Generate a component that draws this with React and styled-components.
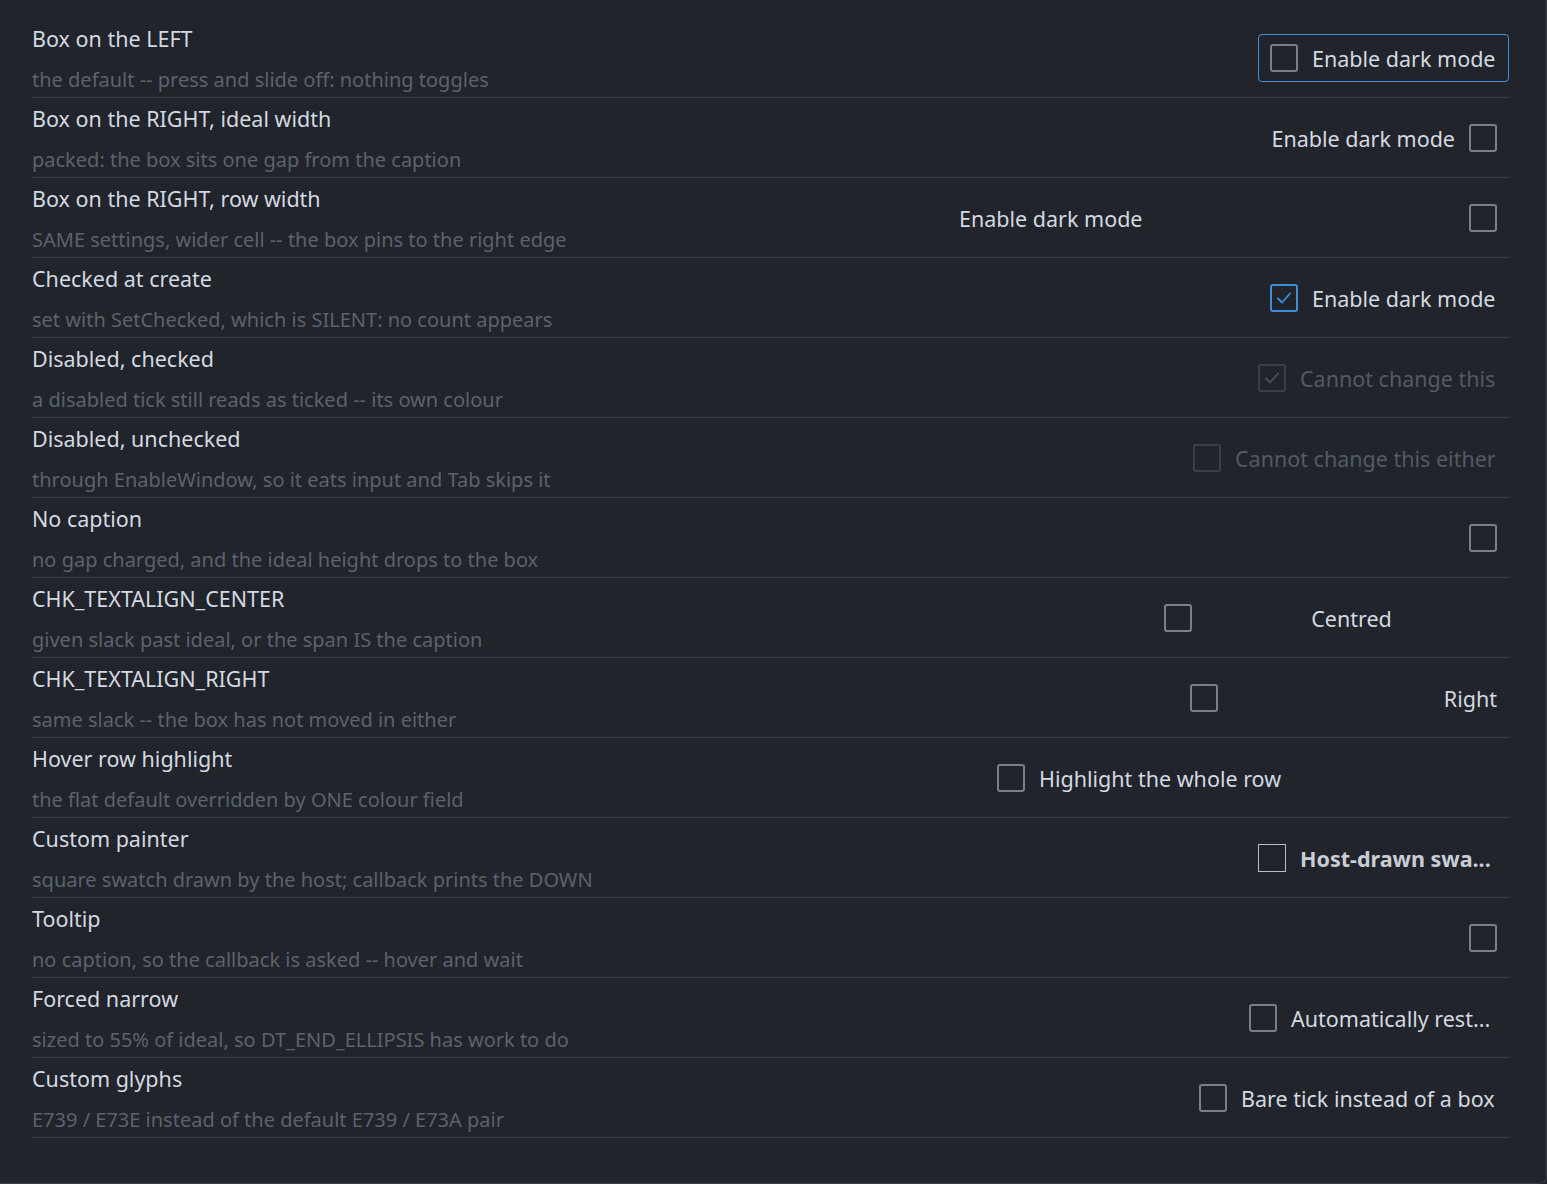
import React from 'react'
import styled, { createGlobalStyle } from 'styled-components'

const GlobalStyle = createGlobalStyle`
  html, body {
    margin: 0;
    padding: 0;
    background: #21242b;
  }
  body {
    font-family: "Noto Sans", "Open Sans", sans-serif;
  }
`;

const Window = styled.div`
  box-sizing: border-box;
  width: 1547px;
  height: 1184px;
  padding: 18px 37px 0 32px;
  background: #21242b;
  border-right: 1px solid #3a3d44;
  border-bottom: 1px solid #3a3d44;
  border-bottom-right-radius: 8px;
  overflow: hidden;
`;

const Row = styled.div`
  box-sizing: border-box;
  height: 80px;
  display: flex;
  align-items: center;
  border-bottom: 1px solid #3a3d44;
`;

const Text = styled.div`
  flex: 1;
  min-width: 0;
  display: flex;
  flex-direction: column;
  align-self: stretch;
`;

const Title = styled.div`
  font-size: 21.5px;
  line-height: 42px;
  height: 40px;
  color: #d3d9e0;
  white-space: nowrap;
`;

const Sub = styled.div`
  font-size: 20px;
  line-height: 44px;
  height: 39px;
  color: #5b626c;
  white-space: nowrap;
`;

const Cell = styled.div`
  box-sizing: border-box;
  width: ${({ $width }) => $width}px;
  height: 48px;
  display: flex;
  align-items: center;
  gap: 14px;
  padding: 0 11px;
  border: 1px solid ${({ $focus }) => ($focus ? '#4a8fd2' : 'transparent')};
  border-radius: 4px;
  flex-direction: ${({ $boxRight }) => ($boxRight ? 'row-reverse' : 'row')};
  justify-content: ${({ $spread }) => ($spread ? 'space-between' : 'flex-start')};
`;

const Caption = styled.span`
  flex: ${({ $fill }) => ($fill ? 1 : '0 0 auto')};
  padding-top: 3px;
  font-size: 21.5px;
  line-height: 26px;
  white-space: nowrap;
  font-weight: ${({ $bold }) => ($bold ? 700 : 400)};
  color: ${({ $disabled, $bold }) => ($disabled ? '#535a63' : $bold ? '#c9ced6' : '#d3d9e0')};
  text-align: ${({ $align }) => $align || 'left'};
`;

const Box = styled.span`
  box-sizing: border-box;
  flex: 0 0 auto;
  width: 28px;
  height: 28px;
  display: flex;
  align-items: center;
  justify-content: center;
  border-radius: ${({ $square }) => ($square ? '0' : '3px')};
  border: ${({ $square }) => ($square ? '1px' : '2px')} solid
    ${({ $checked, $disabled, $square }) =>
      $disabled ? '#3a3f47' : $checked ? '#3d8edb' : $square ? '#b9bcc0' : '#7a8088'};
  color: ${({ $disabled }) => ($disabled ? '#4b525b' : '#3d8edb')};
`;

const Tick = () => (
  <svg width="18" height="18" viewBox="0 0 18 18" fill="none">
    <polyline points="3,9.5 7,13.5 15,4.5" stroke="currentColor" strokeWidth="1.8" strokeLinecap="round" strokeLinejoin="round" />
  </svg>
);

function Check({ checked, disabled, square }) {
  return (
    <Box $checked={checked} $disabled={disabled} $square={square}>
      {checked && <Tick />}
    </Box>
  );
}

const rows = [
  { title: 'Box on the LEFT', sub: 'the default -- press and slide off: nothing toggles', width: 251, focus: true, label: 'Enable dark mode' },
  { title: 'Box on the RIGHT, ideal width', sub: 'packed: the box sits one gap from the caption', width: 251, boxRight: true, label: 'Enable dark mode' },
  { title: 'Box on the RIGHT, row width', sub: 'SAME settings, wider cell -- the box pins to the right edge', width: 562, boxRight: true, spread: true, label: 'Enable dark mode' },
  { title: 'Checked at create', sub: 'set with SetChecked, which is SILENT: no count appears', width: 251, checked: true, label: 'Enable dark mode' },
  { title: 'Disabled, checked', sub: 'a disabled tick still reads as ticked -- its own colour', width: 263, checked: true, disabled: true, label: 'Cannot change this' },
  { title: 'Disabled, unchecked', sub: 'through EnableWindow, so it eats input and Tab skips it', width: 328, disabled: true, label: 'Cannot change this either' },
  { title: 'No caption', sub: 'no gap charged, and the ideal height drops to the box', width: 51, boxRight: true },
  { title: 'CHK_TEXTALIGN_CENTER', sub: 'given slack past ideal, or the span IS the caption', width: 357, label: 'Centred', align: 'center' },
  { title: 'CHK_TEXTALIGN_RIGHT', sub: 'same slack -- the box has not moved in either', width: 331, label: 'Right', align: 'right' },
  { title: 'Hover row highlight', sub: 'the flat default overridden by ONE colour field', width: 524, label: 'Highlight the whole row' },
  { title: 'Custom painter', sub: 'square swatch drawn by the host; callback prints the DOWN', width: 263, square: true, bold: true, label: 'Host-drawn swa...' },
  { title: 'Tooltip', sub: 'no caption, so the callback is asked -- hover and wait', width: 51, boxRight: true },
  { title: 'Forced narrow', sub: 'sized to 55% of ideal, so DT_END_ELLIPSIS has work to do', width: 272, label: 'Automatically rest...' },
  { title: 'Custom glyphs', sub: 'E739 / E73E instead of the default E739 / E73A pair', width: 322, label: 'Bare tick instead of a box' },
];

export default function App() {
  return (
    <>
      <GlobalStyle />
      <Window>
        {rows.map((r) => (
          <Row key={r.title}>
            <Text>
              <Title>{r.title}</Title>
              <Sub>{r.sub}</Sub>
            </Text>
            <Cell $width={r.width} $focus={r.focus} $boxRight={r.boxRight} $spread={r.spread}>
              <Check checked={r.checked} disabled={r.disabled} square={r.square} />
              {r.label && (
                <Caption $disabled={r.disabled} $bold={r.bold} $align={r.align} $fill={!!r.align}>
                  {r.label}
                </Caption>
              )}
            </Cell>
          </Row>
        ))}
      </Window>
    </>
  );
}
